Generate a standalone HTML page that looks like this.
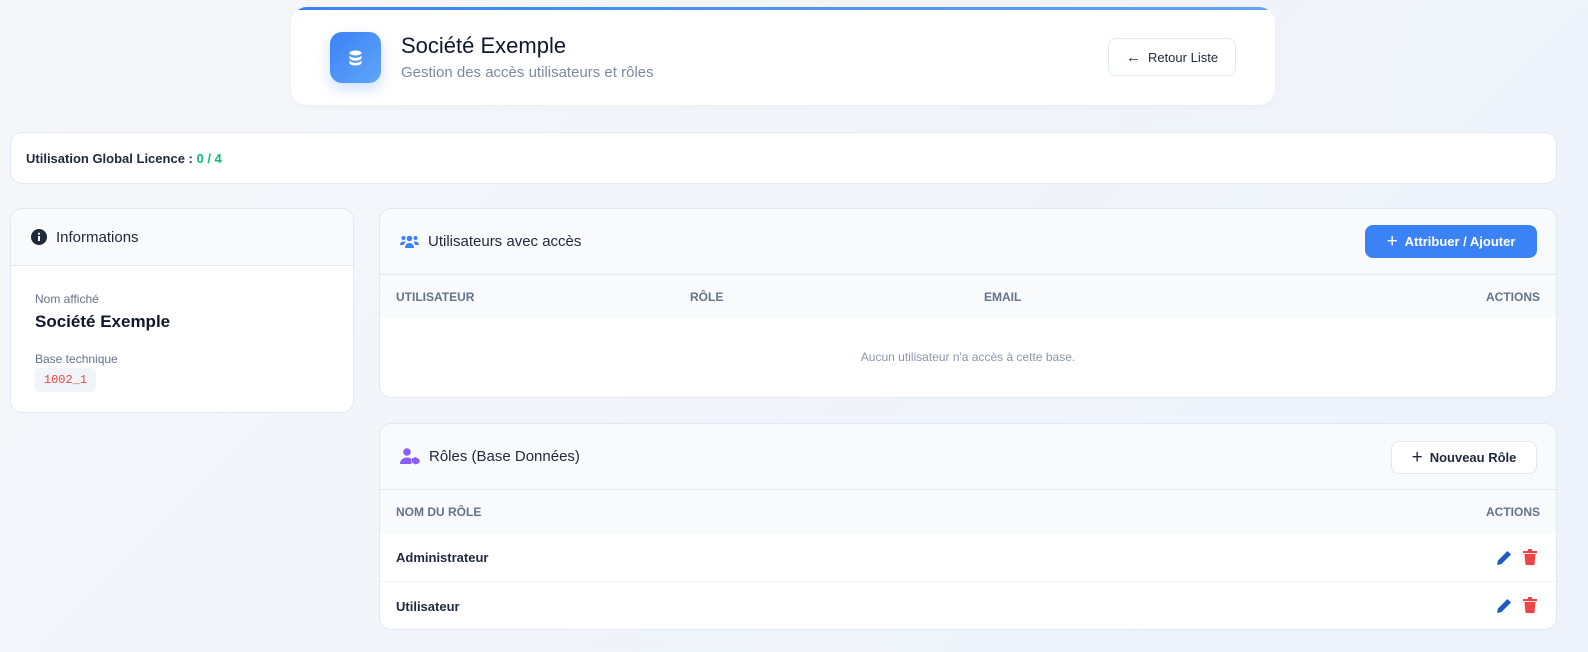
<!DOCTYPE html>
<html><head><meta charset="utf-8"><style>
*{box-sizing:border-box;margin:0;padding:0}
body{width:1588px;height:652px;overflow:hidden;background:linear-gradient(135deg,#f5f7fa,#edf2fb);font-family:"Liberation Sans",sans-serif;color:#1e293b;position:relative}
.card{position:absolute;background:#fff;border:1px solid #e2e8f0;border-radius:12px;overflow:hidden}
.hdr{position:absolute;left:291px;top:7px;width:984px;height:98px;background:#fff;border-radius:16px;overflow:hidden;box-shadow:0 2px 8px rgba(0,0,0,.03)}
.hdr:before{content:"";position:absolute;left:0;top:0;right:0;height:3px;background:linear-gradient(90deg,#3b82f6,#60a5fa)}
.ico{position:absolute;left:39px;top:25px;width:51px;height:51px;border-radius:12px;background:linear-gradient(135deg,#3b82f6,#60a5fa);box-shadow:0 6px 14px rgba(59,130,246,.25)}
.btn{position:absolute;border:1px solid #e2e8f0;border-radius:8px;background:#fff;font-size:13px;font-weight:bold;color:#1e293b;display:flex;align-items:center;justify-content:center;gap:7px}
.ch{position:absolute;left:0;right:0;top:0;background:#f9fafb;border-bottom:1px solid #e2e8f0;display:flex;align-items:center;padding-left:20px;font-size:15px;color:#1e293b;gap:9px}
.th{position:absolute;left:0;right:0;background:#f8fafc;font-size:12px;font-weight:bold;color:#64748b;display:flex;align-items:center}
.row{position:absolute;left:0;right:0;font-size:13px;font-weight:bold;color:#1e293b;display:flex;align-items:center;padding-left:16px;border-bottom:1px solid #f1f5f9}
</style></head><body>
<div class="hdr">
 <div class="ico"><svg width="51" height="51" viewBox="0 0 51 51"><g fill="#fff"><ellipse cx="25.5" cy="21" rx="6" ry="2.5"/><path d="M19.5 23.5c1 1.6 3.5 2.3 6 2.3s5-.7 6-2.3v3c-1 1.6-3.5 2.3-6 2.3s-5-.7-6-2.3z"/><path d="M19.5 28.5c1 1.6 3.5 2.3 6 2.3s5-.7 6-2.3v2.5c0 1.4-2.7 2.5-6 2.5s-6-1.1-6-2.5z"/></g></svg></div>
 <div style="position:absolute;left:110px;top:26px;font-size:22px;color:#0f172a">Société Exemple</div>
 <div style="position:absolute;left:110px;top:57px;font-size:15px;color:#7c8aa0">Gestion des accès utilisateurs et rôles</div>
 <div class="btn" style="left:817px;top:31px;width:128px;height:38px;font-weight:normal;font-size:13px"><span style="font-size:15px">←</span>Retour Liste</div>
</div>
<div class="card" style="left:10px;top:132px;width:1547px;height:52px;display:flex;align-items:center;padding-left:15px;font-size:13px;font-weight:bold">Utilisation Global Licence :&nbsp;<span style="color:#10b981">0 / 4</span></div>

<div class="card" style="left:10px;top:208px;width:344px;height:205px">
 <div class="ch" style="height:57px"><svg width="16" height="16" viewBox="0 0 16 16"><circle cx="8" cy="8" r="8" fill="#1e293b"/><rect x="7" y="7" width="2" height="5" fill="#fff"/><circle cx="8" cy="4.7" r="1.1" fill="#fff"/></svg>Informations</div>
 <div style="position:absolute;left:24px;top:83px;font-size:12px;color:#64748b">Nom affiché</div>
 <div style="position:absolute;left:24px;top:103px;font-size:17px;font-weight:bold;color:#0f172a">Société Exemple</div>
 <div style="position:absolute;left:24px;top:143px;font-size:12px;color:#64748b">Base technique</div>
 <div style="position:absolute;left:24px;top:159px;width:61px;height:24px;background:#f1f5f9;border-radius:4px;font-family:'Liberation Mono',monospace;font-size:12px;color:#ef4444;display:flex;align-items:center;justify-content:center">1002_1</div>
</div>

<div class="card" style="left:379px;top:208px;width:1178px;height:190px">
 <div class="ch" style="height:66px"><svg width="19" height="14" viewBox="0 0 19 14" fill="#3b82f6"><circle cx="9.5" cy="3.5" r="2.8"/><circle cx="3.5" cy="3" r="2"/><circle cx="15.5" cy="3" r="2"/><path d="M5 13c0-3 2-5 4.5-5s4.5 2 4.5 5z"/><path d="M0 10c0-2 1.5-3.5 3.5-3.5 1 0 1.6.3 2 .6C4.5 8 4 9 3.9 10z"/><path d="M19 10c0-2-1.5-3.5-3.5-3.5-1 0-1.6.3-2 .6 1 .9 1.5 1.9 1.6 2.9z"/></svg>Utilisateurs avec accès</div>
 <div class="btn" style="left:985px;top:16px;width:172px;height:33px;background:#3b82f6;border-color:#3b82f6;color:#fff"><span style="font-size:19px;font-weight:normal">+</span>Attribuer / Ajouter</div>
 <div class="th" style="top:66px;height:43px"><span style="position:absolute;left:16px">UTILISATEUR</span><span style="position:absolute;left:310px">RÔLE</span><span style="position:absolute;left:604px">EMAIL</span><span style="position:absolute;right:16px">ACTIONS</span></div>
 <div style="position:absolute;left:0;right:0;top:141px;text-align:center;font-size:12px;color:#8a97aa">Aucun utilisateur n'a accès à cette base.</div>
</div>

<div class="card" style="left:379px;top:423px;width:1178px;height:207px">
 <div class="ch" style="height:66px"><svg width="20" height="17" viewBox="0 0 20 17" fill="#8b5cf6"><circle cx="7" cy="4" r="3.8"/><path d="M0 16c0-4 3-6.5 7-6.5 2 0 3.5.6 4.5 1.5V16z"/><path d="M12 10.5l3.5-1.5 4 2.5v3.5l-4 1.5-3.5-2z" /></svg>Rôles (Base Données)</div>
 <div class="btn" style="left:1011px;top:17px;width:146px;height:33px"><span style="font-size:19px;font-weight:normal">+</span>Nouveau Rôle</div>
 <div class="th" style="top:66px;height:44px"><span style="position:absolute;left:16px">NOM DU RÔLE</span><span style="position:absolute;right:16px">ACTIONS</span></div>
 <div class="row" style="top:110px;height:48px">Administrateur</div>
 <div class="row" style="top:158px;height:48px;border:0">Utilisateur</div>
 <svg style="position:absolute;left:1116px;top:126px" width="16" height="16" viewBox="0 0 16 16"><path d="M1 15l1-4.5L11.5 1l3.5 3.5L5.5 14z" fill="#1e5bbf"/></svg>
 <svg style="position:absolute;left:1143px;top:125px" width="14" height="16" viewBox="0 0 14 16" fill="#ef4444"><rect x="0" y="2" width="14" height="2.2"/><rect x="5" y="0" width="4" height="2.5"/><path d="M1.5 5h11l-1 11h-9z"/></svg>
 <svg style="position:absolute;left:1116px;top:174px" width="16" height="16" viewBox="0 0 16 16"><path d="M1 15l1-4.5L11.5 1l3.5 3.5L5.5 14z" fill="#1e5bbf"/></svg>
 <svg style="position:absolute;left:1143px;top:173px" width="14" height="16" viewBox="0 0 14 16" fill="#ef4444"><rect x="0" y="2" width="14" height="2.2"/><rect x="5" y="0" width="4" height="2.5"/><path d="M1.5 5h11l-1 11h-9z"/></svg>
</div>
</body></html>
